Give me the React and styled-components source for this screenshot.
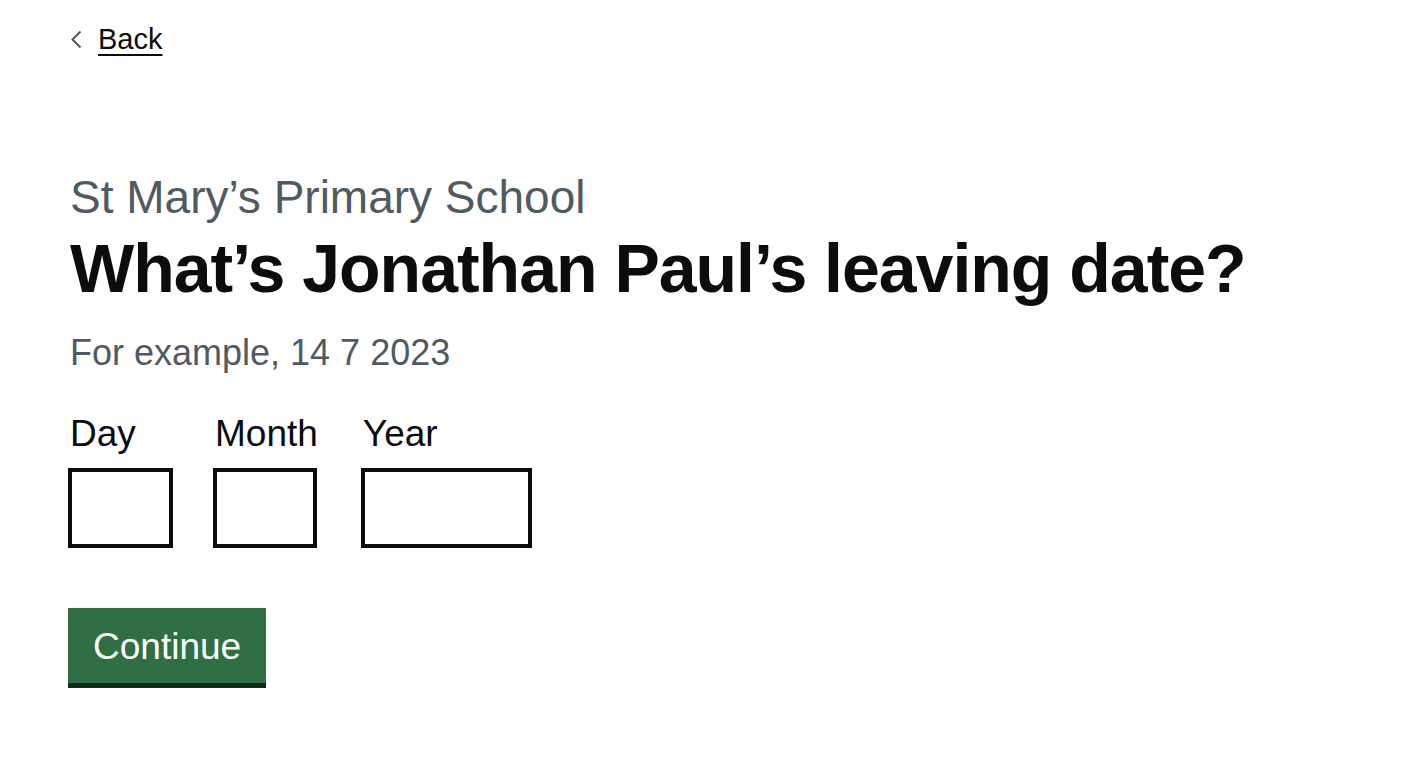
import React from "react";
import styled, { createGlobalStyle } from "styled-components";

const GlobalStyle = createGlobalStyle`
    body {
        margin: 0;
        background: #ffffff;
        color: #0b0c0c;
        font-family: "Liberation Sans", Arial, sans-serif;
    }
`;

const Page = styled.div`
    padding: 24px 68px 40px;
`;

const BackLink = styled.a`
    display: inline-flex;
    align-items: center;
    gap: 16px;
    font-size: 29px;
    line-height: 30px;
    color: #0b0c0c;
    text-decoration: none;
    margin-left: 2px;
    span {
        text-decoration: underline;
        text-decoration-thickness: 2px;
        text-underline-offset: 5px;
    }
`;

const Caption = styled.span`
    display: block;
    margin-top: 118px;
    font-size: 46px;
    line-height: 50px;
    color: #505a5f;
    margin-left: 2px;
`;

const Heading = styled.h1`
    margin: 6px 0 0 2px;
    font-size: 68px;
    line-height: 80px;
    font-weight: 700;
    letter-spacing: -1px;
`;

const Hint = styled.div`
    margin: 25px 0 0 2px;
    font-size: 36px;
    line-height: 40px;
    color: #505a5f;
`;

const DateRow = styled.div`
    display: flex;
    margin-top: 41px;
`;

const Field = styled.div`
    display: flex;
    flex-direction: column;
    gap: 14px;
    margin-right: ${(p) => p.$gap}px;
`;

const Label = styled.label`
    font-size: 37px;
    line-height: 40px;
    margin-left: 2px;
`;

const Input = styled.input`
    box-sizing: border-box;
    width: ${(p) => p.$w}px;
    height: 80px;
    border: 4px solid #0b0c0c;
    border-radius: 0;
    font: inherit;
    font-size: 37px;
    padding: 0 10px;
    background: #fff;
`;

const Button = styled.button`
    margin-top: 60px;
    display: block;
    background: #306f44;
    color: #ffffff;
    border: 0;
    border-radius: 0;
    box-shadow: 0 5px 0 #0f2a18;
    font-family: inherit;
    font-size: 37px;
    line-height: 40px;
    padding: 19px 25px 16px;
    cursor: pointer;
`;

const Chevron = () => (
    <svg width="12" height="19" viewBox="0 0 12 19" fill="none">
        <path d="M10.5 1.5 L2.5 9.5 L10.5 17.5" stroke="#505a5f" strokeWidth="2" />
    </svg>
);

const fields = [
    { id: "day", label: "Day", w: 105, gap: 40 },
    { id: "month", label: "Month", w: 104, gap: 43 },
    { id: "year", label: "Year", w: 171, gap: 0 },
];

export default function App() {
    return (
        <>
            <GlobalStyle />
            <Page>
                <BackLink href="#">
                    <Chevron />
                    <span>Back</span>
                </BackLink>
                <Caption>St Mary’s Primary School</Caption>
                <Heading>What’s Jonathan Paul’s leaving date?</Heading>
                <Hint>For example, 14 7 2023</Hint>
                <DateRow>
                    {fields.map((f) => (
                        <Field key={f.id} $gap={f.gap}>
                            <Label htmlFor={f.id}>{f.label}</Label>
                            <Input id={f.id} type="text" $w={f.w} />
                        </Field>
                    ))}
                </DateRow>
                <Button>Continue</Button>
            </Page>
        </>
    );
}
